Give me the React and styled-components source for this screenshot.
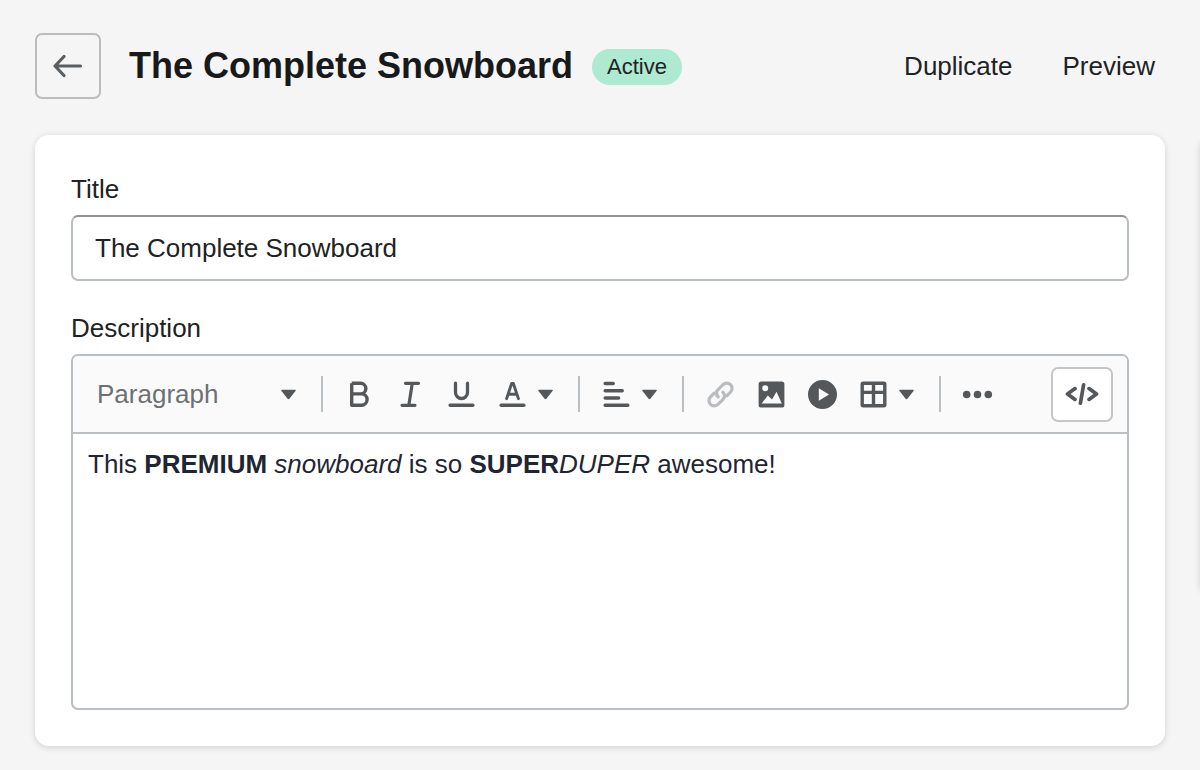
import React from "react";
import styled, { createGlobalStyle } from "styled-components";

const GlobalStyle = createGlobalStyle`
  *, *::before, *::after { box-sizing: border-box; }
  body {
    margin: 0;
    background: #f5f5f5;
    color: #202223;
    font-family: "Liberation Sans", Arial, sans-serif;
    font-size: 26px;
    line-height: 36px;
  }
  button, input, select { font: inherit; color: inherit; margin: 0; }
`;

const Page = styled.main`
  min-height: 100vh;
  padding: 33px 35px 24px;
  overflow: clip;
`;

const Header = styled.header`
  display: flex;
  align-items: center;
  margin-bottom: 36px;
`;

const BackButton = styled.button`
  display: flex;
  align-items: center;
  justify-content: center;
  width: 66px;
  height: 66px;
  padding: 0;
  border: 2px solid #babcbe;
  border-radius: 7px;
  background: transparent;
`;

const Heading = styled.h1`
  margin: 0 19px 0 28px;
  color: #17191a;
  font-size: 36px;
  line-height: 44px;
  font-weight: 700;
  white-space: nowrap;
`;

const Badge = styled.span`
  padding: 0 15px;
  border-radius: 18px;
  background: #aee9d1;
  font-size: 22px;
  line-height: 36px;
  margin-top: 2px;
`;

const Actions = styled.nav`
  display: flex;
  gap: 50px;
  margin-left: auto;
  padding-right: 10px;
`;

const ActionButton = styled.button`
  padding: 0;
  border: 0;
  background: none;
`;

const Columns = styled.div`
  display: flex;
  align-items: flex-start;
  gap: 35px;
`;

const Card = styled.section`
  flex: 0 0 ${(p) => (p.$side ? "33%" : "100%")};
  min-height: ${(p) => (p.$side ? "460px" : "0")};
  padding: 36px;
  border-radius: 14px;
  background: #fff;
  box-shadow: 0 0 9px rgba(23, 24, 24, 0.05), 0 2px 6px rgba(0, 0, 0, 0.1);
`;

const Field = styled.div`
  display: flex;
  flex-direction: column;
  gap: 8px;
  & + & { margin-top: 29px; }
`;

const Label = styled.label`
  align-self: flex-start;
`;

const TextInput = styled.input`
  width: 100%;
  height: 66px;
  padding: 0 22px;
  border: 2px solid #babfc3;
  border-top-color: #909396;
  border-radius: 7px;
  background: #fff;
  outline: 0;
`;

const Editor = styled.div`
  border: 2px solid #babfc3;
  border-radius: 7px;
  overflow: hidden;
`;

const Toolbar = styled.div`
  display: flex;
  align-items: center;
  height: 78px;
  padding: 0 14px 0 8px;
  border-bottom: 2px solid #babfc3;
  background: #fafafa;
  color: #55585b;
`;

const SelectWrap = styled.div`
  display: grid;
  align-items: center;
  width: 230px;
  & > * { grid-area: 1 / 1; }
  & > svg { justify-self: end; margin-right: 15px; pointer-events: none; }
`;

const StyleSelect = styled.select`
  appearance: none;
  width: 100%;
  height: 54px;
  padding: 0 36px 0 16px;
  border: 0;
  background: transparent;
  color: #6d7175;
  outline: 0;
`;

const Separator = styled.span`
  width: 2px;
  height: 36px;
  margin: 0 11px 0 10px;
  background: #babfc3;
`;

const ToolButton = styled.button`
  display: flex;
  align-items: center;
  gap: 11px;
  width: ${(p) => (p.$menu ? "81px" : "51px")};
  height: 54px;
  padding: 0 0 0 11px;
  border: 0;
  background: none;
  color: ${(p) => (p.disabled ? "#babdc0" : "inherit")};
`;

const CodeButton = styled.button`
  display: flex;
  align-items: center;
  justify-content: center;
  width: 62px;
  height: 55px;
  margin-left: auto;
  padding: 0;
  border: 2px solid #c4c7ca;
  border-radius: 7px;
  background: #fff;
`;

const EditorBody = styled.div`
  min-height: 274px;
  padding: 12px 15px;
  color: #1f2533;
  outline: 0;
  p { margin: 0; }
`;

const icons = {
  bold: (
    <path d="M6.7 3.3V25.3H16.4A5.7 5.7 0 0 0 16.4 13.9H6.7M15.6 13.9A5.3 5.3 0 0 0 15.6 3.3H6.7" strokeWidth="3.4" strokeLinejoin="round" />
  ),
  italic: <path d="M9.5 3.3H22.5M6 25.3H19M16.3 3.3L12.8 25.3" strokeWidth="3.2" strokeLinecap="round" />,
  underline: (
    <>
      <path d="M8.5 3.2V12.5A6 6 0 0 0 20.5 12.5V3.2" strokeWidth="3.3" strokeLinecap="round" />
      <path d="M3.2 25.3H25.8" strokeWidth="3.4" strokeLinecap="round" />
    </>
  ),
  color: (
    <>
      <path d="M8.6 18.6L13.6 3.6H15.4L20.4 18.6M10.4 14.3H18.6" strokeWidth="3" strokeLinecap="round" strokeLinejoin="round" />
      <path d="M3.2 25.3H25.8" strokeWidth="3.4" strokeLinecap="round" />
    </>
  ),
  align: <path d="M3.2 3.5H11.2M3.2 10.8H20.2M3.2 18H16.6M3.2 25.3H25.8" strokeWidth="3.5" strokeLinecap="round" />,
  link: (
    <g strokeWidth="3.3" strokeLinecap="round" strokeLinejoin="round">
      <path d="M12.2 16.8C9.8 14.3 10.2 11.5 12.2 9.4L16.8 4.9C19 2.7 22.4 2.6 24.5 4.7C26.6 6.8 26.5 10.2 24.3 12.4L21 15.7" />
      <path d="M16.8 12.2C19.2 14.7 18.8 17.5 16.8 19.6L12.2 24.1C10 26.3 6.6 26.4 4.5 24.3C2.4 22.2 2.5 18.8 4.7 16.6L8 13.3" />
    </g>
  ),
  image: (
    <path fill="currentColor" stroke="none" fillRule="evenodd"
      d="M4.2 1.5H24.8A2.6 2.6 0 0 1 27.4 4.1V24.9A2.6 2.6 0 0 1 24.8 27.5H4.2A2.6 2.6 0 0 1 1.6 24.9V4.1A2.6 2.6 0 0 1 4.2 1.5ZM8.2 5.2A3 3 0 1 0 8.2 11.2A3 3 0 1 0 8.2 5.2ZM4.6 23.6H24.8L19.5 11.8L15 19.5L10.8 15.6Z" />
  ),
  video: (
    <path fill="currentColor" stroke="none" fillRule="evenodd"
      d="M14.5 0A14.5 14.5 0 1 0 14.5 29A14.5 14.5 0 1 0 14.5 0ZM10.8 8.3V20.7L21 14.5Z" />
  ),
  table: (
    <path d="M4.2 3.2H24.8Q25.8 3.2 25.8 4.2V24.8Q25.8 25.8 24.8 25.8H4.2Q3.2 25.8 3.2 24.8V4.2Q3.2 3.2 4.2 3.2ZM14.5 3.2V25.8M3.2 12.4H25.8" strokeWidth="3.4" />
  ),
  more: (
    <g fill="currentColor" stroke="none">
      <circle cx="3.7" cy="14.5" r="3.8" />
      <circle cx="14.5" cy="14.5" r="3.8" />
      <circle cx="25.3" cy="14.5" r="3.8" />
    </g>
  ),
};

const Icon = ({ name }) => (
  <svg width="29" height="29" viewBox="0 0 29 29" fill="none" stroke="currentColor" aria-hidden="true" overflow="visible">
    {icons[name]}
  </svg>
);

const Caret = () => (
  <svg width="15" height="11" viewBox="0 0 15 11" fill="#55585b" aria-hidden="true">
    <path d="M.9 .7H14.1Q15.3 .8 14.5 1.9L8.6 9.5Q7.5 10.8 6.4 9.5L.5 1.9Q-.3 .8 .9 .7Z" />
  </svg>
);

const Tool = ({ icon, label, menu, disabled }) => (
  <ToolButton type="button" aria-label={label} $menu={menu} disabled={disabled}>
    <Icon name={icon} />
    {menu && <Caret />}
  </ToolButton>
);

export default function App() {
  return (
    <>
      <GlobalStyle />
      <Page>
        <Header>
          <BackButton type="button" aria-label="Back">
            <svg width="30" height="24" viewBox="0 0 30 24" fill="none" stroke="#5c5f62" strokeWidth="3.2" strokeLinecap="round" strokeLinejoin="round" aria-hidden="true">
              <path d="M27.5 12H2.5M11 2.5L2 12L11 21.5" />
            </svg>
          </BackButton>
          <Heading>The Complete Snowboard</Heading>
          <Badge>Active</Badge>
          <Actions>
            <ActionButton type="button">Duplicate</ActionButton>
            <ActionButton type="button">Preview</ActionButton>
          </Actions>
        </Header>
        <Columns>
          <Card>
            <Field>
              <Label htmlFor="title">Title</Label>
              <TextInput id="title" type="text" defaultValue="The Complete Snowboard" />
            </Field>
            <Field>
              <Label as="span" id="description-label">Description</Label>
              <Editor>
                <Toolbar role="toolbar" aria-label="Formatting">
                  <SelectWrap>
                    <StyleSelect aria-label="Text style" defaultValue="Paragraph">
                      <option>Paragraph</option>
                    </StyleSelect>
                    <Caret />
                  </SelectWrap>
                  <Separator />
                  <Tool icon="bold" label="Bold" />
                  <Tool icon="italic" label="Italic" />
                  <Tool icon="underline" label="Underline" />
                  <Tool icon="color" label="Text color" menu />
                  <Separator />
                  <Tool icon="align" label="Alignment" menu />
                  <Separator />
                  <Tool icon="link" label="Insert link" disabled />
                  <Tool icon="image" label="Insert image" />
                  <Tool icon="video" label="Insert video" />
                  <Tool icon="table" label="Insert table" menu />
                  <Separator />
                  <Tool icon="more" label="More" />
                  <CodeButton type="button" aria-label="Show HTML">
                    <svg width="34" height="24" viewBox="0 0 34 24" fill="none" stroke="#55585b" strokeWidth="3.7" strokeLinecap="round" strokeLinejoin="round" aria-hidden="true">
                      <path d="M10 6.6L2.5 12L10 17.4M24 6.6L31.5 12L24 17.4M18.6 2.8L15.4 21.2" />
                    </svg>
                  </CodeButton>
                </Toolbar>
                <EditorBody role="textbox" aria-multiline="true" aria-labelledby="description-label" tabIndex={0}>
                  <p>
                    This <strong>PREMIUM</strong> <em>snowboard</em> is so <strong>SUPER</strong>
                    <em>DUPER</em> awesome!
                  </p>
                </EditorBody>
              </Editor>
            </Field>
          </Card>
          <Card as="aside" $side />
        </Columns>
      </Page>
    </>
  );
}
